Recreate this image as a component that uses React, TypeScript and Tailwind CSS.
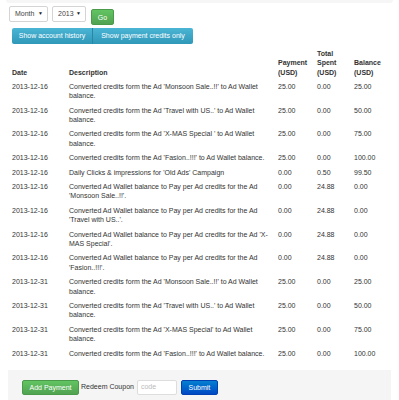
import React from 'react';

type Row = { date: string; desc: string; pay: string; spent: string; bal: string };

const rows: Row[] = [
  { date: '2013-12-16', desc: "Converted credits form the Ad 'Monsoon Sale..!!' to Ad Wallet balance.", pay: '25.00', spent: '0.00', bal: '25.00' },
  { date: '2013-12-16', desc: "Converted credits form the Ad 'Travel with US..' to Ad Wallet balance.", pay: '25.00', spent: '0.00', bal: '50.00' },
  { date: '2013-12-16', desc: "Converted credits form the Ad 'X-MAS Special ' to Ad Wallet balance.", pay: '25.00', spent: '0.00', bal: '75.00' },
  { date: '2013-12-16', desc: "Converted credits form the Ad 'Fasion..!!!' to Ad Wallet balance.", pay: '25.00', spent: '0.00', bal: '100.00' },
  { date: '2013-12-16', desc: "Daily Clicks & impressions for 'Old Ads' Campaign", pay: '0.00', spent: '0.50', bal: '99.50' },
  { date: '2013-12-16', desc: "Converted Ad Wallet balance to Pay per Ad credits for the Ad 'Monsoon Sale..!!'.", pay: '0.00', spent: '24.88', bal: '0.00' },
  { date: '2013-12-16', desc: "Converted Ad Wallet balance to Pay per Ad credits for the Ad 'Travel with US..'.", pay: '0.00', spent: '24.88', bal: '0.00' },
  { date: '2013-12-16', desc: "Converted Ad Wallet balance to Pay per Ad credits for the Ad 'X-MAS Special'.", pay: '0.00', spent: '24.88', bal: '0.00' },
  { date: '2013-12-16', desc: "Converted Ad Wallet balance to Pay per Ad credits for the Ad 'Fasion..!!!'.", pay: '0.00', spent: '24.88', bal: '0.00' },
  { date: '2013-12-31', desc: "Converted credits form the Ad 'Monsoon Sale..!!' to Ad Wallet balance.", pay: '25.00', spent: '0.00', bal: '25.00' },
  { date: '2013-12-31', desc: "Converted credits form the Ad 'Travel with US..' to Ad Wallet balance.", pay: '25.00', spent: '0.00', bal: '50.00' },
  { date: '2013-12-31', desc: "Converted credits form the Ad 'X-MAS Special' to Ad Wallet balance.", pay: '25.00', spent: '0.00', bal: '75.00' },
  { date: '2013-12-31', desc: "Converted credits form the Ad 'Fasion..!!!' to Ad Wallet balance.", pay: '25.00', spent: '0.00', bal: '100.00' },
];

function FakeSelect({ label, width }: { label: string; width: string }) {
  return (
    <div className={`${width} h-[16px] flex items-center justify-between pl-[5px] pr-[4px] bg-white border border-[#d4d4d4] rounded-[2px] text-[7px] text-[#444]`}>
      <span>{label}</span>
      <span className="text-[5px] text-[#222]">▼</span>
    </div>
  );
}

export default function App() {
  return (
    <div className="w-[399px] h-[400px] overflow-hidden bg-white text-[#333] font-['Liberation_Sans',Arial,sans-serif]">
      {/* panel edge above */}
      <div className="mx-[6px] h-[3px] bg-[#f6f6f6] rounded-b-[3px]" />

      {/* filter form */}
      <div className="flex items-start gap-[4px] ml-[9px] mt-[3px]">
        <FakeSelect label="Month" width="w-[39px]" />
        <FakeSelect label="2013" width="w-[34px]" />
        <button className="ml-[1px] mt-[3px] w-[23px] h-[16px] rounded-[2px] bg-gradient-to-b from-[#62c462] to-[#51a351] border border-[#4a9a4a] text-white text-[7px] leading-none">
          Go
        </button>
      </div>

      {/* view toggle */}
      <div className="flex ml-[12px] mt-[3px] h-[16px] w-[181px] rounded-[2px] overflow-hidden text-white text-[7px]">
        <div className="w-[81px] flex items-center justify-center bg-gradient-to-b from-[#4bb5d6] to-[#2f98b8] border-r border-[#2a86a3]">
          Show account history
        </div>
        <div className="flex-1 flex items-center justify-center bg-gradient-to-b from-[#4bb5d6] to-[#2f98b8]">
          Show payment credits only
        </div>
      </div>

      {/* transactions */}
      <table className="ml-[10px] mt-[3px] w-[382px] table-fixed border-collapse text-[7px] leading-[9.4px]">
        <colgroup>
          <col className="w-[57px]" />
          <col className="w-[209px]" />
          <col className="w-[39px]" />
          <col className="w-[37px]" />
          <col className="w-[40px]" />
        </colgroup>
        <thead>
          <tr className="font-bold text-left align-bottom">
            <th className="px-[2px] py-[2px]">Date</th>
            <th className="px-[2px] py-[2px]">Description</th>
            <th className="px-[2px] py-[2px]">Payment (USD)</th>
            <th className="px-[2px] py-[2px]">Total Spent (USD)</th>
            <th className="px-[2px] py-[2px]">Balance (USD)</th>
          </tr>
        </thead>
        <tbody>
          {rows.map((r, i) => (
            <tr key={i} className="align-top">
              <td className="px-[2px] py-[2.5px]">{r.date}</td>
              <td className="px-[2px] py-[2.5px]">{r.desc}</td>
              <td className="px-[2px] py-[2.5px]">{r.pay}</td>
              <td className="px-[2px] py-[2.5px]">{r.spent}</td>
              <td className="px-[2px] py-[2.5px]">{r.bal}</td>
            </tr>
          ))}
        </tbody>
      </table>

      {/* actions */}
      <div className="mx-[8px] mt-[9px] h-[40px] bg-[#f5f5f5] pt-[10px] pl-[14px] flex items-start gap-[2px] text-[7px]">
        <button className="w-[57px] h-[15px] rounded-[2px] bg-gradient-to-b from-[#62c462] to-[#51a351] border border-[#4a9a4a] text-white leading-none">
          Add Payment
        </button>
        <span className="h-[15px] flex items-center text-[#333]">Redeem Coupon</span>
        <div className="ml-[1px] w-[40px] h-[15px] bg-white border border-[#ddd] rounded-[2px] flex items-center pl-[3px] text-[#bbb]">
          code
        </div>
        <button className="ml-[2px] w-[37px] h-[15px] rounded-[2px] bg-gradient-to-b from-[#0a7fd0] to-[#0048c4] border border-[#0040b0] text-white leading-none">
          Submit
        </button>
      </div>
    </div>
  );
}
